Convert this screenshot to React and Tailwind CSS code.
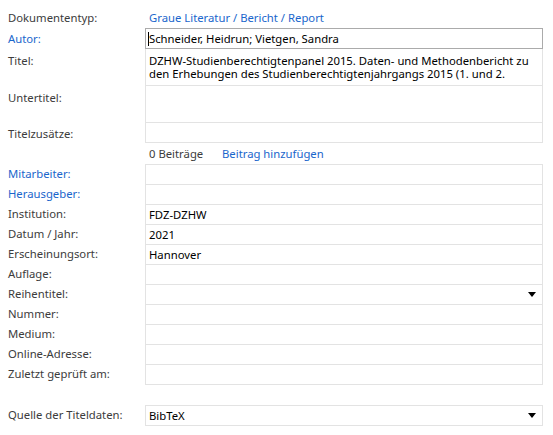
import React from 'react';

const label = 'text-[#3c3c3c]';
const link = 'text-[#1a66cc]';

function Arrow() {
  return (
    <svg width="8" height="5" viewBox="0 0 8 5" className="mr-[6px]">
      <path d="M0 0H8L4 5Z" fill="#000" />
    </svg>
  );
}

function Row({ name, value, blue, select, last }) {
  return (
    <div className="flex h-[20px]">
      <div className={`w-[145px] pl-[8px] flex items-center ${blue ? link : label}`}>{name}</div>
      <div
        className={`flex-1 flex items-center justify-between pl-[3px] border-x border-t border-[#e3e3e3] ${last ? 'border-b h-[21px]' : ''}`}
      >
        <span className="text-black">{value}</span>
        {select && <Arrow />}
      </div>
    </div>
  );
}

export default function App() {
  const rows = [
    { name: 'Mitarbeiter:', blue: true },
    { name: 'Herausgeber:', blue: true },
    { name: 'Institution:', value: 'FDZ-DZHW' },
    { name: 'Datum / Jahr:', value: '2021' },
    { name: 'Erscheinungsort:', value: 'Hannover' },
    { name: 'Auflage:' },
    { name: 'Reihentitel:', select: true },
    { name: 'Nummer:' },
    { name: 'Medium:' },
    { name: 'Online-Adresse:' },
    { name: 'Zuletzt geprüft am:' },
  ];

  return (
    <div className="w-[553px] h-[435px] bg-white pr-[10px] pt-[8px] text-[11.3px] leading-[14px]" style={{ fontFamily: '"Noto Sans", "Open Sans", sans-serif' }}>
      {/* Kopf */}
      <div className="flex h-[20px] items-center">
        <div className={`w-[145px] pl-[8px] ${label}`}>Dokumententyp:</div>
        <div className={`pl-[4px] ${link}`}>Graue Literatur / Bericht / Report</div>
      </div>

      {/* Titelangaben */}
      <div className="flex">
        <div className="w-[145px] pl-[8px] flex flex-col">
          <div className={`h-[21px] flex items-center ${link}`}>Autor:</div>
          <div className={`h-[37px] pt-[5px] ${label}`}>Titel:</div>
          <div className={`h-[37px] pt-[5px] ${label}`}>Untertitel:</div>
          <div className={`h-[20px] pt-[4px] ${label}`}>Titelzusätze:</div>
        </div>
        <div className="flex-1 flex flex-col">
          <div className="h-[21px] border border-[#ababab] flex items-center pl-[2px]">
            <span className="w-px h-[14px] bg-black" />
            <span className="text-black">Schneider, Heidrun; Vietgen, Sandra</span>
          </div>
          <div className="h-[37px] overflow-hidden border-x border-b border-[#e3e3e3] pl-[3px] pr-[6px] pt-[5px] leading-[13px] text-black">
            DZHW-Studienberechtigtenpanel 2015. Daten- und Methodenbericht zu den Erhebungen des Studienberechtigtenjahrgangs 2015 (1. und 2.
          </div>
          <div className="h-[37px] border-x border-b border-[#e3e3e3]" />
          <div className="h-[20px] border-x border-b border-[#e3e3e3]" />
        </div>
      </div>

      <div className="flex h-[21px] items-center">
        <div className="w-[145px]" />
        <div className="w-[77px] pl-[4px] text-[#3c3c3c]">0 Beiträge</div>
        <div className={link}>Beitrag hinzufügen</div>
      </div>

      {/* Weitere Angaben */}
      <div className="flex flex-col">
        {rows.map((r, i) => (
          <Row key={r.name} {...r} last={i === rows.length - 1} />
        ))}
      </div>

      <div className="h-[21px]" />
      <Row name="Quelle der Titeldaten:" value="BibTeX" select last />
    </div>
  );
}
